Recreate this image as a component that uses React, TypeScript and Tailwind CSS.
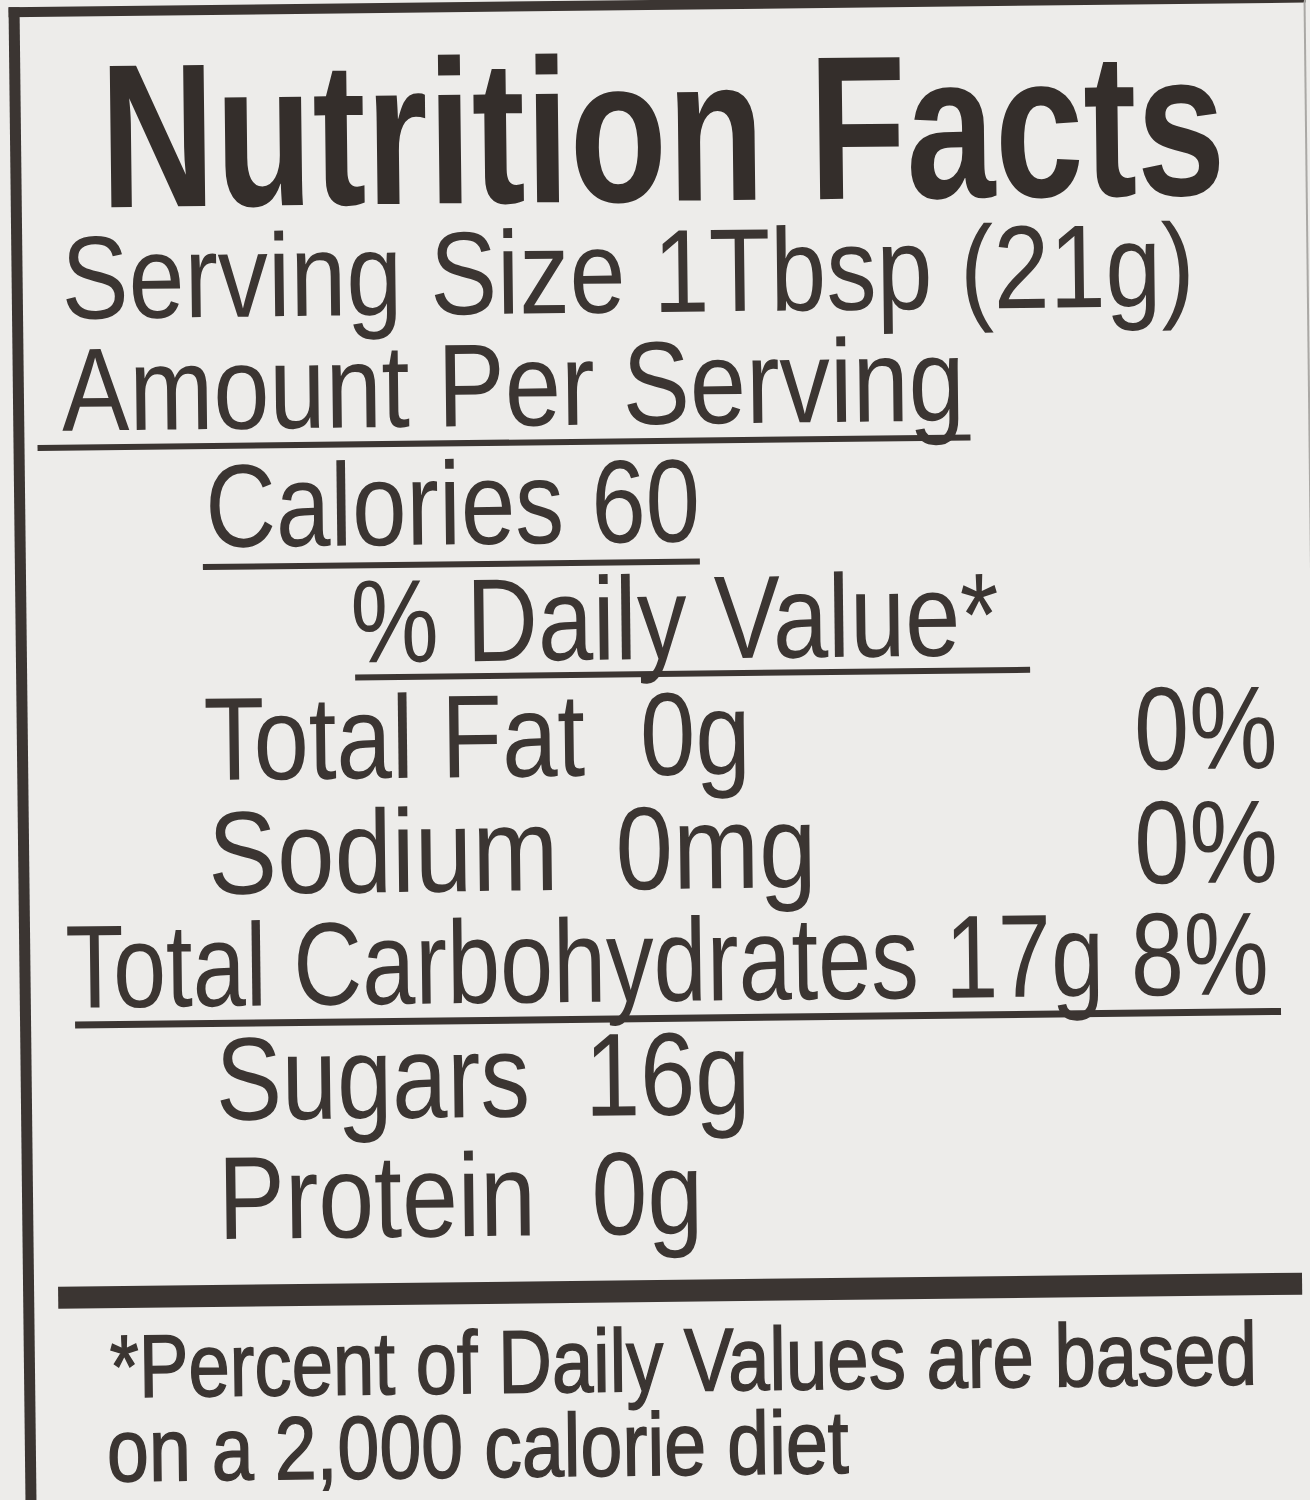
export default function App() {
  return (
    <div className="w-[1310px] h-[1500px] overflow-hidden bg-[#edecea] text-[#3b3532] font-['Liberation_Sans',Arial,sans-serif]">
      <div className="w-[1310px] h-[1500px] rotate-[-0.65deg]">
        <div className="ml-[17px] w-[1297px] h-[1520px] border-l-[11px] border-t-[10px] border-r-2 border-[#3b3532] border-r-[#aaa8a5]">
          {/* Title */}
          <div className="pt-[35px]">
            <div className="h-[170px] leading-[170px] text-[205px] font-bold pl-[79px] whitespace-nowrap text-[#342e2b]">
              <span className="inline-block origin-left scale-x-[0.778]">Nutrition Facts</span>
            </div>
          </div>
          {/* Serving */}
          <div className="h-[113px] leading-[113px] text-[118px] pl-[39px] whitespace-pre">
            <span className="inline-block origin-left scale-x-[0.851]">Serving Size 1Tbsp (21g)</span>
          </div>
          {/* Amount */}
          <div className="h-[110px] leading-[110px] text-[118px] pl-[38px] whitespace-pre">
            <span className="inline-block origin-left scale-x-[0.855]">Amount Per Serving</span>
          </div>
          <div className="ml-[13px] w-[933px] h-[6px] bg-[#3b3532]" />
          {/* Calories */}
          <div className="h-[115px] leading-[115px] text-[118px] pl-[180px] whitespace-pre">
            <span className="inline-block origin-left scale-x-[0.829]">Calories 60</span>
          </div>
          <div className="ml-[177px] w-[497px] h-[6px] bg-[#3b3532]" />
          {/* % Daily Value */}
          <div className="h-[106px] leading-[106px] text-[118px] pl-[324px] whitespace-pre">
            <span className="inline-block origin-left scale-x-[0.84]">% Daily Value*</span>
          </div>
          <div className="ml-[328px] w-[675px] h-[6px] bg-[#3b3532]" />
          {/* Total Fat */}
          <div className="h-[114px] leading-[114px] text-[118px] pl-[176px] pr-[34px] whitespace-pre flex justify-between">
            <span className="inline-block origin-left scale-x-[0.842]">Total Fat  0g</span>
            <span className="inline-block origin-right scale-x-[0.84]">0%</span>
          </div>
          {/* Sodium */}
          <div className="h-[114px] leading-[114px] text-[118px] pl-[179px] pr-[35px] whitespace-pre flex justify-between">
            <span className="inline-block origin-left scale-x-[0.875]">Sodium  0mg</span>
            <span className="inline-block origin-right scale-x-[0.84]">0%</span>
          </div>
          {/* Total Carbohydrates */}
          <div className="h-[110px] leading-[110px] text-[118px] pl-[35px] whitespace-pre">
            <span className="inline-block origin-left scale-x-[0.808]">Total Carbohydrates 17g 8%</span>
          </div>
          <div className="ml-[44px] w-[1206px] h-[7px] bg-[#3b3532]" />
          {/* Sugars */}
          <div className="h-[104px] leading-[104px] text-[118px] pl-[184px] whitespace-pre">
            <span className="inline-block origin-left scale-x-[0.84]">Sugars  16g</span>
          </div>
          {/* Protein */}
          <div className="h-[134px] leading-[134px] text-[118px] pl-[185px] whitespace-pre">
            <span className="inline-block origin-left scale-x-[0.85]">Protein  0g</span>
          </div>
          {/* Thick bar */}
          <div className="mt-[20px] ml-[24px] w-[1244px] h-[22px] bg-[#3b3532]" />
          {/* Footnote */}
          <div className="mt-[16px] h-[84px] leading-[84px] text-[89px] pl-[75px] whitespace-pre">
            <span className="inline-block origin-left scale-x-[0.835] [-webkit-text-stroke:1.5px_#3b3532]">*Percent of Daily Values are based</span>
          </div>
          <div className="h-[84px] leading-[84px] text-[89px] pl-[71px] whitespace-pre">
            <span className="inline-block origin-left scale-x-[0.847] [-webkit-text-stroke:1.5px_#3b3532]">on a 2,000 calorie diet</span>
          </div>
        </div>
      </div>
    </div>
  );
}
